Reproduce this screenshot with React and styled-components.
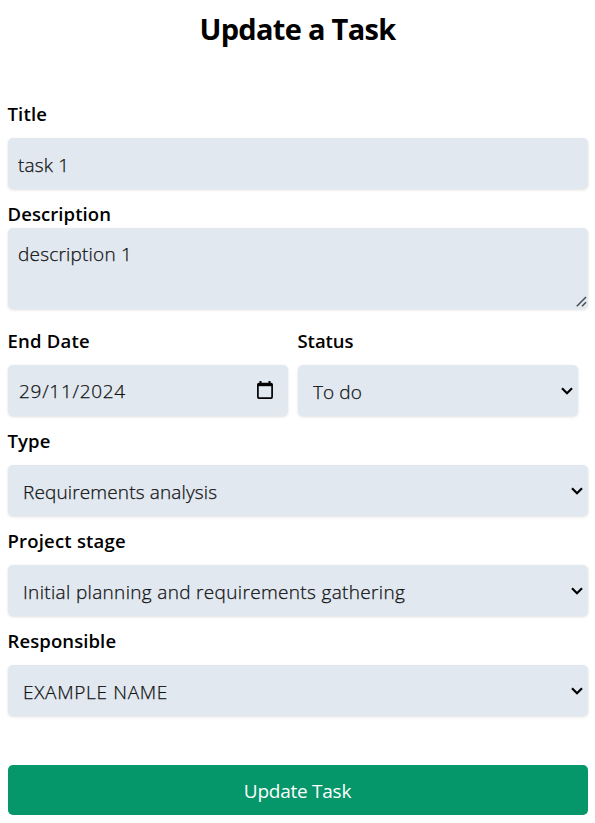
import React from "react";
import styled, { createGlobalStyle } from "styled-components";

const GlobalStyle = createGlobalStyle`
  * { box-sizing: border-box; }
  body { margin: 0; background: #fff; color: #000; font-family: "Segoe UI", "Open Sans", "Noto Sans", sans-serif; }
`;

const Page = styled.main`
  width: 595px;
  height: 823px;
  padding: 7px 7px 0 8px;
  overflow: hidden;
`;

const Heading = styled.h1`
  margin: 0 0 49px;
  padding-right: 1px;
  text-align: center;
  font-size: 29px;
  line-height: 44px;
  font-weight: 700;
  letter-spacing: -0.7px;
`;

const Form = styled.form`
  display: flex;
  flex-direction: column;
`;

const Field = styled.div`
  display: flex;
  flex-direction: column;
  height: ${(p) => p.$height || 100}px;
`;

const Label = styled.label`
  flex: none;
  height: ${(p) => (p.$tight ? 28 : 38)}px;
  line-height: 28px;
  margin-left: -0.5px;
  font-size: 18.5px;
  font-weight: 600;
  letter-spacing: ${(p) => p.$spacing || 0}px;
`;

const control = `
  display: block;
  width: 100%;
  margin: 0;
  border: 0;
  border-radius: 5px;
  outline: 0;
  background: #e1e8f0;
  color: #111;
  box-shadow: 0 1px 3px rgba(0, 0, 0, 0.13);
  font-family: inherit;
  font-size: 19px;
  font-weight: 300;
  -webkit-text-stroke: 0.25px #111;
`;

const Input = styled.input`
  ${control}
  height: 51px;
  padding: ${(p) => (p.$date ? "1px 11px 0" : "3px 10px 0")};
  letter-spacing: ${(p) => p.$spacing || 0}px;
`;

const TextArea = styled.textarea`
  ${control}
  height: 81px;
  padding: 12px 10px;
  line-height: 28px;
  letter-spacing: ${(p) => p.$spacing || 0}px;
  resize: none;
`;

const Columns = styled.div`
  display: grid;
  grid-template-columns: 280px 280px;
  column-gap: 10px;
`;

const ControlBox = styled.div`
  display: grid;
  align-items: center;

  > * { grid-area: 1 / 1; }
`;

const Select = styled.select`
  ${control}
  appearance: none;
  height: 51px;
  padding: 3px 30px 0 15px;
  letter-spacing: ${(p) => p.$spacing || 0}px;
`;

const Chevron = styled.svg`
  justify-self: end;
  width: 12px;
  height: 8px;
  margin-right: 5px;
  pointer-events: none;
`;

const Calendar = styled.svg`
  justify-self: end;
  width: 18px;
  height: 20px;
  margin: 0 14px 2px 0;
  pointer-events: none;
`;

const Grip = styled.svg`
  justify-self: end;
  align-self: end;
  width: 11px;
  height: 11px;
  margin: 0 1px 2px 0;
  pointer-events: none;
`;

const Submit = styled.button`
  height: 50px;
  padding: 2px 1px 0 0;
  border: 0;
  border-radius: 5px;
  background: #059669;
  color: #fff;
  font-family: inherit;
  font-size: 19px;
  font-weight: 400;
  letter-spacing: ${(p) => p.$spacing || 0}px;
`;

function SelectField({ label, value, labelSpacing, spacing, height }) {
  return (
    <Field $height={height}>
      <Label $spacing={labelSpacing}>{label}</Label>
      <ControlBox>
        <Select defaultValue={value} $spacing={spacing}>
          <option>{value}</option>
        </Select>
        <Chevron viewBox="0 0 12 8">
          <path d="M1 1.3 6 6.2 11 1.3" fill="none" stroke="#000" strokeWidth="2.2" />
        </Chevron>
      </ControlBox>
    </Field>
  );
}

export default function App() {
  return (
    <>
      <GlobalStyle />
      <Page>
        <Heading>Update a Task</Heading>
        <Form onSubmit={(e) => e.preventDefault()}>
          <Field>
            <Label $spacing={0.15}>Title</Label>
            <Input defaultValue="task 1" $spacing={0.15} />
          </Field>
          <Field $height={127}>
            <Label $tight $spacing={0.08}>Description</Label>
            <ControlBox>
              <TextArea defaultValue="description 1" spellCheck={false} $spacing={0.2} />
              <Grip viewBox="0 0 11 11">
                <path d="M.8 10.2 10 1M6 10.2 10 6.2" fill="none" stroke="#484b50" strokeWidth="1.5" />
              </Grip>
            </ControlBox>
          </Field>
          <Columns>
            <Field>
              <Label $spacing={0.2}>End Date</Label>
              <ControlBox>
                <Input defaultValue="29/11/2024" $date $spacing={0.72} />
                <Calendar viewBox="0 0 18 20">
                  <path d="M4.5 1v3M13.5 1v3" stroke="#000" strokeWidth="2" />
                  <rect x="1.9" y="3.5" width="14.2" height="14.6" rx="1" fill="none" stroke="#000" strokeWidth="1.7" />
                  <path d="M2 4.7h14" stroke="#000" strokeWidth="3" />
                </Calendar>
              </ControlBox>
            </Field>
            <SelectField label="Status" value="To do" spacing={0.1} labelSpacing={-0.05} />
          </Columns>
          <SelectField label="Type" value="Requirements analysis" spacing={0.14} labelSpacing={0.1} />
          <SelectField
            label="Project stage"
            value="Initial planning and requirements gathering"
            spacing={0.33}
            labelSpacing={0.2}
          />
          <SelectField label="Responsible" value="EXAMPLE NAME" spacing={0.68} labelSpacing={0.1} height={138} />
          <Submit type="submit" $spacing={-0.25}>Update Task</Submit>
        </Form>
      </Page>
    </>
  );
}
